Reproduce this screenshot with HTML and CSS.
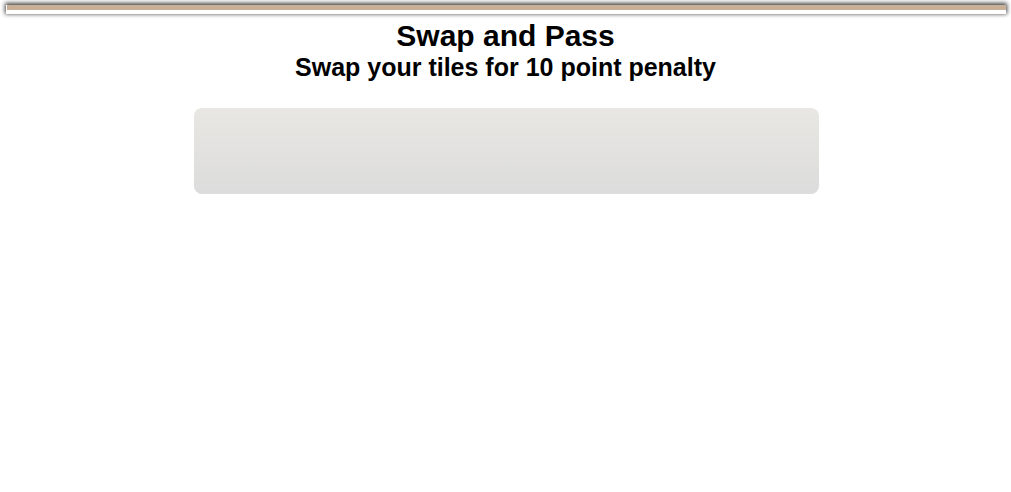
FILE: index.html
```html
<!DOCTYPE html>
<html>
<head>
<meta charset="utf-8">
<link rel="stylesheet" href="styles.css">
</head>
<body>
<div class="topbar"><div class="topbar-fill"></div></div>
<header class="heading">
  <h1 class="title">Swap and Pass</h1>
  <h2 class="subtitle">Swap your tiles for 10 point penalty</h2>
</header>
<div class="rack"></div>
</body>
</html>
```

FILE: styles.css
```css
html, body {
  margin: 0;
  padding: 0;
  background: #ffffff;
  font-family: "Liberation Sans", Arial, Helvetica, sans-serif;
  color: #000;
}
.topbar {
  margin: 5px 5px 0 6px;
  height: 9px;
  background: #ffffff;
  box-shadow: 0 -1px 4px 1px #444;
}
.topbar-fill {
  height: 5px;
  margin-top: 1px;
  margin-left: 1px;
  background: #c8b097;
}
.heading {
  text-align: center;
  margin-top: 5px;
}
.title {
  margin: 0;
  font-size: 30px;
  line-height: 34px;
  font-weight: bold;
}
.subtitle {
  margin: 0;
  font-size: 25px;
  line-height: 28px;
  font-weight: bold;
}
.rack {
  width: 625px;
  height: 86px;
  margin: 27px 0 0 194px;
  border-radius: 8px;
  background: linear-gradient(to bottom, #e8e7e3, #dcdcdc);
}
```
